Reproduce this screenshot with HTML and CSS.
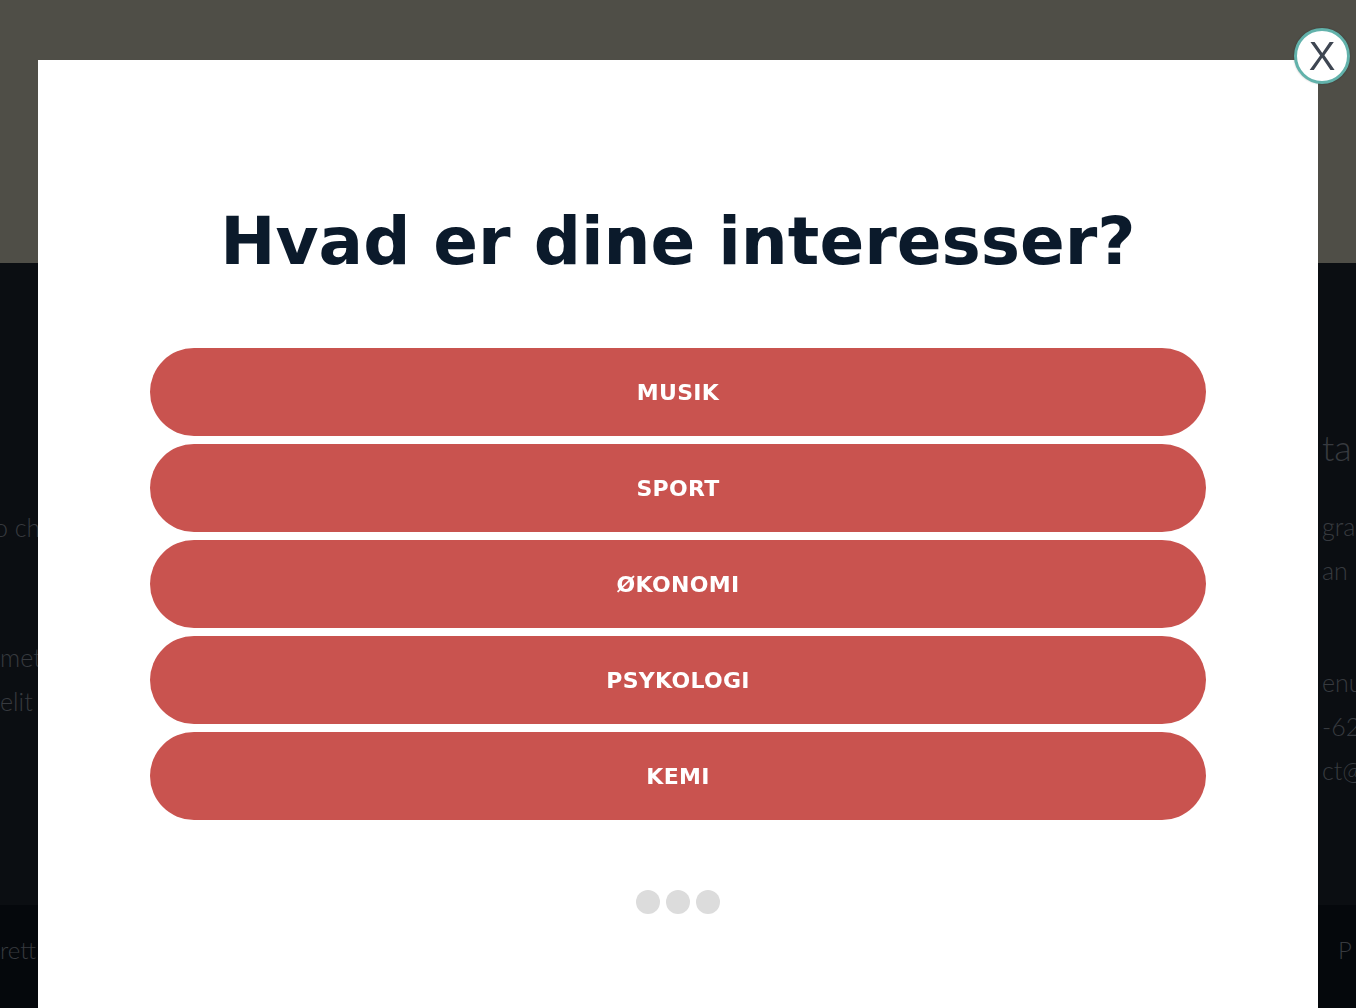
FILE: index.html
```html
<!DOCTYPE html>
<html lang="da">
<head>
<meta charset="utf-8">
<title>Hvad er dine interesser?</title>
<link rel="stylesheet" href="styles.css">
</head>
<body>
<div class="page">
  <header class="hero"></header>
  <section class="info">
    <div class="col col-left">
      <p class="line first">o ch</p>
      <p class="line gap">met</p>
      <p class="line">elit</p>
    </div>
    <div class="col col-right">
      <p class="heading">ta</p>
      <p class="line">gra</p>
      <p class="line">an</p>
      <p class="line gap">enu</p>
      <p class="line">-62</p>
      <p class="line">ct@</p>
    </div>
  </section>
  <footer class="foot">
    <p class="foot-left">rett</p>
    <p class="foot-right">P</p>
  </footer>
</div>

<div class="overlay">
  <div class="modal">
    <button class="close" aria-label="Luk">X</button>
    <h1 class="title">Hvad er dine interesser?</h1>
    <div class="options">
      <button class="option">MUSIK</button>
      <button class="option">SPORT</button>
      <button class="option">ØKONOMI</button>
      <button class="option">PSYKOLOGI</button>
      <button class="option">KEMI</button>
    </div>
    <div class="dots">
      <span class="dot"></span><span class="dot"></span><span class="dot"></span>
    </div>
  </div>
</div>
</body>
</html>
```
FILE: styles.css
```css
* { box-sizing: border-box; }
html, body { margin: 0; padding: 0; }
body {
  width: 1356px;
  height: 1008px;
  overflow: hidden;
  font-family: "DejaVu Sans", "Liberation Sans", sans-serif;
  background: #0b0e13;
}
.page { display: flex; flex-direction: column; height: 1008px; }
.hero { height: 263px; background: #4f4e47; flex: none; }
.info {
  flex: none;
  height: 642px;
  background: #0b0e12;
  display: flex;
  justify-content: space-between;
  padding-top: 164px;
}
.col p { margin: 0; font-family: "Lato", "DejaVu Sans", sans-serif; font-weight: 300; color: #373a3f; font-size: 25px; line-height: 44px; white-space: nowrap; }
.col-left { width: 40px; }
.col-left .first { margin-left: -6px; margin-top: 78px; }
.col-left .gap { margin-top: 86px; }
.col-right { width: 40px; padding-left: 6px; }
.col-right .heading { font-size: 36px; line-height: 40px; margin-bottom: 37px; }
.col-right .gap { margin-top: 68px; }
.foot {
  flex: 1;
  background: #05080c;
  display: flex;
  justify-content: space-between;
  padding-top: 30px;
}
.foot p { margin: 0; font-family: "Lato", "DejaVu Sans", sans-serif; font-weight: 300; color: #373a3f; font-size: 24px; line-height: 30px; white-space: nowrap; width: 40px; }
.foot-right { padding-left: 22px; }

.overlay { position: fixed; inset: 0; }
.modal {
  position: absolute;
  left: 38px;
  top: 60px;
  width: 1280px;
  height: 960px;
  background: #ffffff;
  display: flex;
  flex-direction: column;
  align-items: center;
  padding-top: 134px;
}
.close {
  position: absolute;
  right: -32px;
  top: -32px;
  width: 56px;
  height: 56px;
  border-radius: 50%;
  border: 3px solid #62b2ab;
  background: #ffffff;
  color: #3e4652;
  font-family: "Liberation Sans", "DejaVu Sans", sans-serif;
  font-size: 40px;
  line-height: 50px;
  padding: 0;
  text-align: center;
  box-shadow: 0 0 2px rgba(0,0,0,0.3);
}
.title {
  margin: 0;
  font-size: 66px;
  line-height: 96px;
  font-weight: 700;
  color: #0b1a2b;
}
.options {
  margin-top: 58px;
  width: 1056px;
  display: flex;
  flex-direction: column;
  gap: 8px;
}
.option {
  height: 88px;
  border: none;
  border-radius: 44px;
  background: #c9534f;
  color: #ffffff;
  font-family: "DejaVu Sans", "Liberation Sans", sans-serif;
  font-weight: 700;
  font-size: 22px;
  letter-spacing: 0.3px;
}
.dots { margin-top: 70px; display: flex; gap: 6px; }
.dot { width: 24px; height: 24px; border-radius: 50%; background: #dcdcdc; }
```
